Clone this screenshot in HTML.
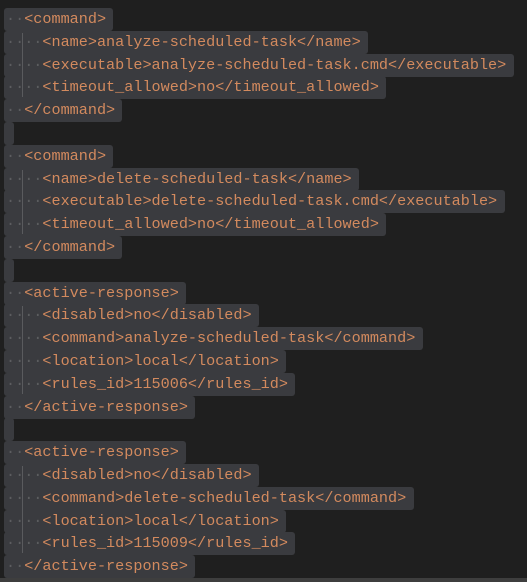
<!DOCTYPE html><html><head><style>
body{margin:0;width:527px;height:582px;background:#1f1f1f;overflow:hidden;position:relative;font-family:"Liberation Mono",monospace;font-size:15.17px}
.l{position:absolute;left:0;height:23px;line-height:23px;white-space:pre;color:#d38a5e}
.s{position:absolute;left:4px;top:0;height:23px;background:#3a3b3f;border-radius:3px}
.t{position:absolute;left:6px;top:0}
.d{color:#5c5d60}
.g{position:absolute;left:22px;width:1px;background:#5a5b5e}
.bar{position:absolute;left:0;bottom:0;width:527px;height:4px;background:#3e3e3e}
</style></head><body>
<div id="c"></div>
<div class="bar"></div>
<script>
var L=["  <command>","    <name>analyze-scheduled-task</name>","    <executable>analyze-scheduled-task.cmd</executable>","    <timeout_allowed>no</timeout_allowed>","  </command>","","  <command>","    <name>delete-scheduled-task</name>","    <executable>delete-scheduled-task.cmd</executable>","    <timeout_allowed>no</timeout_allowed>","  </command>","","  <active-response>","    <disabled>no</disabled>","    <command>analyze-scheduled-task</command>","    <location>local</location>","    <rules_id>115006</rules_id>","  </active-response>","","  <active-response>","    <disabled>no</disabled>","    <command>delete-scheduled-task</command>","    <location>local</location>","    <rules_id>115009</rules_id>","  </active-response>"];
var h="",cw=9.1,lh=22.8;
L.forEach(function(s,i){var top=8+i*lh;var w=s.length?(s.length*cw+2+cw*0.8):10;
var m=s.match(/^ */)[0].length;var txt=s.slice(m).replace(/&/g,"&amp;").replace(/</g,"&lt;");
var dots="";for(var k=0;k<m;k++)dots+="·";
h+='<div class="l" style="top:'+top+'px;width:527px"><div class="s" style="width:'+w+'px"></div><div class="t"><span class="d">'+dots+'</span>'+txt+'</div></div>';});
[[1,3],[7,9],[13,16],[20,23]].forEach(function(r){h+='<div class="g" style="top:'+(8+r[0]*lh+2)+'px;height:'+((r[1]-r[0]+1)*lh-4)+'px"></div>';});
document.getElementById("c").innerHTML=h;
</script>
</body></html>
